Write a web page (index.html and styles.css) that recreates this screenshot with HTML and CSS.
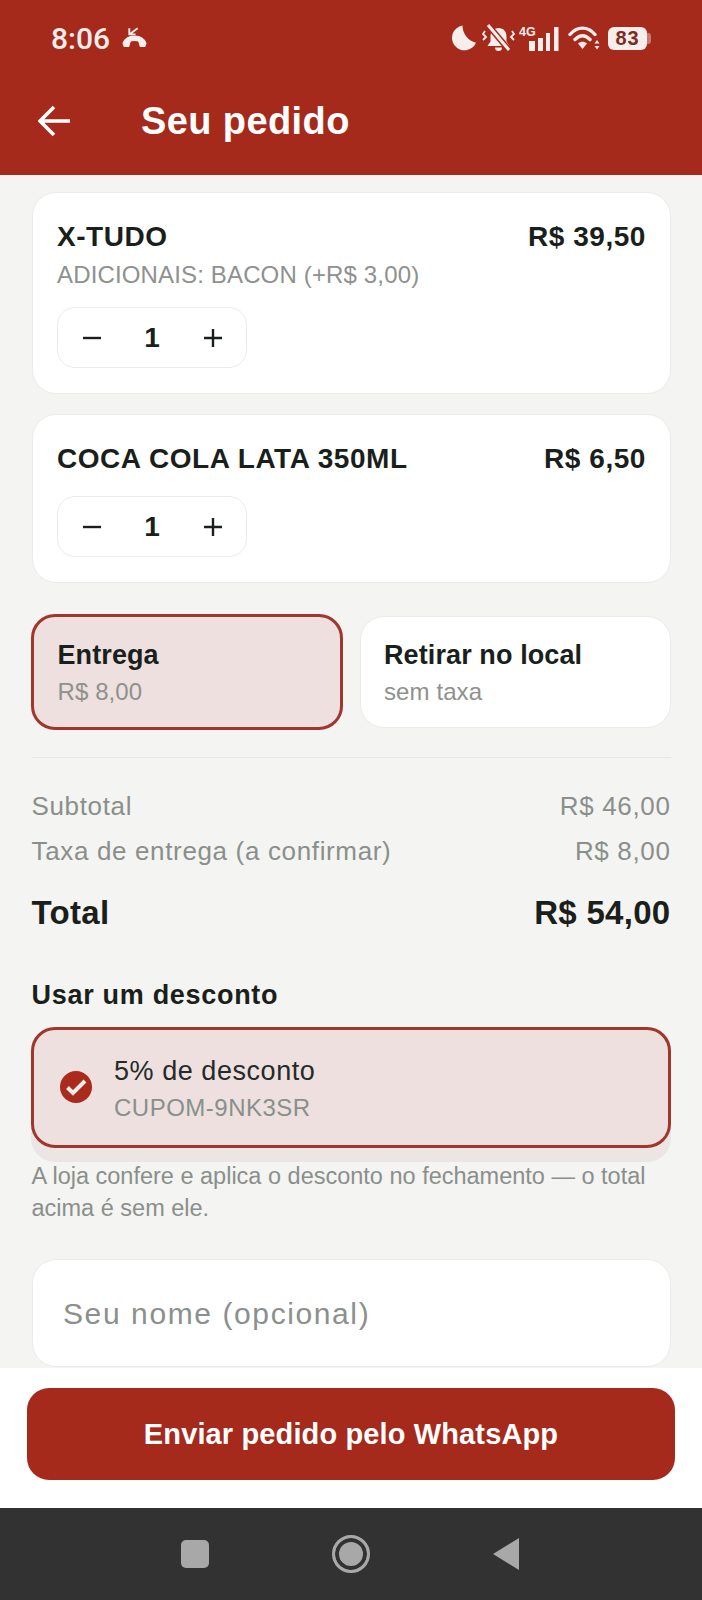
FILE: index.html
```html
<!DOCTYPE html>
<html lang="pt-BR">
<head>
    <meta charset="UTF-8">
    <meta name="viewport" content="width=device-width, initial-scale=1.0">
    <title>Seu pedido</title>
    <link rel="stylesheet" href="styles.css">
</head>
<body>
<div class="screen">
    <header class="top">
        <div class="status">
            <div class="status-left">
                <span class="clock">8:06</span>
                <svg class="ic-call" viewBox="0 0 24 20">
                    <path d="M1 15.500C3 10 7 8.500 12 8.500s9 1.500 11 7l-1 3h-4.500l-1.500-5c-2-1-6-1-8 0l-1.500 5H2z" fill="#f7eeec" stroke="#f7eeec" stroke-linejoin="round"/>
                    <path d="M7 1v6h6M7 7l8-6" stroke="#f7eeec" stroke-width="1.800" fill="none"/>
                </svg>
            </div>
            <div class="status-right">
                <svg class="ic-moon" viewBox="0 0 24 25">
                    <path d="M11 .5A12 12 0 1 0 24 17 A17 17 0 0 1 11 .5z" fill="#f7eeec"/>
                </svg>
                <svg class="ic-bell" viewBox="0 0 33 28">
                    <path d="M16.500 4c-5 0-8 3.500-8 8.500v5l-3 4.500h22l-3-4.500v-5c0-5-3-8.500-8-8.500z" fill="#f7eeec"/>
                    <path d="M13 23.500h7a3.500 3.500 0 0 1-7 0z" fill="#f7eeec"/>
                    <path d="M6 1l21 25" stroke="#a52a1c" stroke-width="6"/>
                    <path d="M6 1l21 25" stroke="#f7eeec" stroke-width="3"/>
                    <path d="M3 7l-2 3 3 3-3 3M30 7l2 3-3 3 3 3" stroke="#f7eeec" stroke-width="1.800" fill="none"/>
                </svg>
                <svg class="ic-signal" viewBox="0 0 40 25">
                    <text class="net" x="0" y="10">4G</text>
                    <rect x="10" y="15" width="6" height="10" fill="#f7eeec"/>
                    <rect x="19" y="12" width="5" height="13" fill="#f7eeec"/>
                    <rect x="27" y="7" width="4" height="18" fill="#f7eeec"/>
                    <rect x="35" y="1" width="4.500" height="24" fill="#f7eeec"/>
                </svg>
                <svg class="ic-wifi" viewBox="0 0 32 24">
                    <path d="M2 8.500C9 0 20 0 27 8.500M7 13.500c5-5 10-5 15 0" stroke="#f7eeec" stroke-width="3.400" stroke-linecap="round" fill="none"/>
                    <path d="M10 17.500c3-2.500 6-2.500 9 0l-4.500 5.500z" fill="#f7eeec"/>
                    <path d="M29 14l2.500 3.500h-5zM29 23.500l2.500-3.500h-5z" fill="#f7eeec"/>
                </svg>
                <div class="battery"><span>83</span></div>
            </div>
        </div>
        <div class="appbar">
            <svg class="ic-back" viewBox="0 0 34 32">
                <path d="M32 16H3M16 2L2 16l14 14" stroke="#fff" stroke-width="3.600" fill="none"/>
            </svg>
            <h1>Seu pedido</h1>
        </div>
    </header>

    <main class="content">
        <div class="card">
            <div class="item-head">
                <span>X-TUDO</span>
                <span>R$ 39,50</span>
            </div>
            <p class="item-sub">ADICIONAIS: BACON (+R$ 3,00)</p>
            <div class="qty">
                <svg viewBox="0 0 20 20"><path d="M1 10h18" /></svg>
                <span>1</span>
                <svg viewBox="0 0 20 20"><path d="M1 10h18M10 1v18" /></svg>
            </div>
        </div>
        <div class="card">
            <div class="item-head">
                <span>COCA COLA LATA 350ML</span>
                <span>R$ 6,50</span>
            </div>
            <div class="qty">
                <svg viewBox="0 0 20 20"><path d="M1 10h18" /></svg>
                <span>1</span>
                <svg viewBox="0 0 20 20"><path d="M1 10h18M10 1v18" /></svg>
            </div>
        </div>

        <div class="delivery">
            <div class="opt opt-on">
                <strong>Entrega</strong>
                <span>R$ 8,00</span>
            </div>
            <div class="opt">
                <strong>Retirar no local</strong>
                <span>sem taxa</span>
            </div>
        </div>

        <hr class="divider">

        <div class="line"><span>Subtotal</span><span>R$ 46,00</span></div>
        <div class="line"><span>Taxa de entrega (a confirmar)</span><span>R$ 8,00</span></div>
        <div class="total"><span>Total</span><span>R$ 54,00</span></div>

        <h2>Usar um desconto</h2>
        <div class="coupon-wrap">
            <div class="coupon">
                <svg class="ic-check" viewBox="0 0 32 32">
                    <circle cx="16" cy="16" r="16" fill="#ab2a1e"/>
                    <path d="M7.500 16.500l5.500 5.500L25 10" stroke="#f7eeec" stroke-width="4" fill="none"/>
                </svg>
                <div class="coupon-text">
                    <p class="coupon-title">5% de desconto</p>
                    <p class="coupon-code">CUPOM-9NK3SR</p>
                </div>
            </div>
        </div>
        <p class="note">A loja confere e aplica o desconto no fechamento — o total acima é sem ele.</p>

        <input class="name" type="text" placeholder="Seu nome (opcional)">
    </main>

    <footer class="bottom">
        <button type="button">Enviar pedido pelo WhatsApp</button>
    </footer>

    <nav class="navbar">
        <div class="nav-cell"><div class="nav-square"></div></div>
        <div class="nav-cell"><div class="nav-circle"></div></div>
        <div class="nav-cell">
            <svg class="ic-tri" viewBox="0 0 26 32"><path d="M26 0v32L0 16z" fill="#a8a8a8"/></svg>
        </div>
    </nav>
</div>
</body>
</html>
```

FILE: styles.css
```css
* {
    box-sizing: border-box;
}

body {
    margin: 0;
    font-family: "Liberation Sans", Arial, sans-serif;
    background-color: #f4f4f2;
    color: #1a1f1c;
}

p, h1, h2 {
    margin: 0;
}

.screen {
    display: flex;
    flex-direction: column;
    width: 702px;
    height: 1600px;
    overflow: hidden;
}

/* red top part */
.top {
    background-color: #a52a1c;
    height: 175px;
    flex-shrink: 0;
}

.status {
    display: flex;
    justify-content: space-between;
    align-items: center;
    height: 76px;
    padding: 0 55px 0 51px;
}

.status-left {
    display: flex;
    align-items: center;
    gap: 12px;
}

.clock {
    font-family: Roboto, sans-serif;
    font-weight: 500;
    font-size: 30px;
    color: #f7eeec;
}

.ic-call {
    width: 25px;
    height: 21px;
    margin-top: -2px;
}

.status-right {
    display: flex;
    align-items: center;
}

.ic-moon {
    width: 25px;
    height: 26px;
    margin-right: 6px;
}

.ic-bell {
    width: 33px;
    height: 28px;
    margin-right: 4px;
}

.ic-signal {
    width: 40px;
    height: 25px;
    margin-right: 9px;
}

.net {
    font-family: "Liberation Sans", sans-serif;
    font-weight: bold;
    font-size: 12.5px;
    fill: #f7eeec;
}

.ic-wifi {
    width: 32px;
    height: 24px;
    margin-right: 8px;
}

.battery {
    position: relative;
    width: 39px;
    height: 23px;
    border-radius: 6px;
    background-color: #f7eeec;
    color: #7d2a20;
    font-size: 20px;
    font-weight: bold;
    letter-spacing: 0.8px;
    line-height: 23px;
    text-align: center;
}

.battery::after {
    content: "";
    position: absolute;
    right: -4px;
    top: 6px;
    width: 4px;
    height: 11px;
    border-radius: 0 3px 3px 0;
    background-color: #c77a70;
}

.appbar {
    display: flex;
    align-items: center;
    height: 90px;
    padding-left: 38px;
}

.ic-back {
    width: 34px;
    height: 32px;
    margin-right: 69px;
}

h1 {
    font-size: 38px;
    font-weight: bold;
    letter-spacing: 0.4px;
    color: #fff;
}

/* scroll area */
.content {
    flex: 1;
    min-height: 0;
    overflow: hidden;
    padding: 17px 31.5px 0 31.5px;
}

.card {
    background-color: #fff;
    border: 1.5px solid #ecebe9;
    border-radius: 24px;
    padding: 25.5px 23.5px 25.5px 24.5px;
    margin-bottom: 20px;
}

.item-head {
    display: flex;
    justify-content: space-between;
    font-size: 28px;
    font-weight: bold;
    letter-spacing: 0.55px;
    line-height: 36px;
    padding-bottom: 3px;
}

.item-sub {
    font-size: 24px;
    line-height: 32px;
    color: #8e918e;
    letter-spacing: 0.15px;
    margin-top: 1px;
}

.qty {
    display: grid;
    grid-template-columns: 68px 52px 70px;
    align-items: center;
    justify-items: center;
    width: 190px;
    height: 61px;
    margin-top: 16px;
    padding-top: 1.5px;
    border: 1.5px solid #ecebe9;
    border-radius: 18px;
    font-size: 28px;
    font-weight: bold;
}

.qty svg {
    width: 20px;
    height: 20px;
    stroke: #1a1f1c;
    stroke-width: 2.400;
    fill: none;
}

.delivery {
    display: grid;
    grid-template-columns: 311px 1fr;
    gap: 17px;
    margin-top: 33px;
}

.opt {
    background-color: #fff;
    border: 1.500px solid #ecebe9;
    border-radius: 24px;
    padding: 20.5px 23.5px 18.5px;
}

.opt-on {
    background-color: #ede0df;
    border: 3px solid #a0362c;
    padding: 21.5px 24px 19px;
    margin: -2.5px 0 -2px -1px;
}

.opt strong {
    display: block;
    font-size: 27px;
    line-height: 34px;
    letter-spacing: 0.1px;
}

.opt span {
    display: block;
    font-size: 24px;
    line-height: 32px;
    margin-top: 4px;
    color: #8e918e;
    letter-spacing: 0.1px;
}

.divider {
    height: 0;
    margin: 29px 0 26px;
    border: 0;
    border-top: 1.5px solid #e8e8e6;
}

.line {
    display: flex;
    justify-content: space-between;
    font-size: 26px;
    line-height: 45px;
    letter-spacing: 0.65px;
    color: #8a8f8b;
}

.total {
    display: flex;
    justify-content: space-between;
    margin-top: 19px;
    font-size: 33px;
    font-weight: bold;
    line-height: 40px;
    letter-spacing: 0.3px;
}

h2 {
    margin-top: 45px;
    font-size: 27px;
    line-height: 34px;
    letter-spacing: 0.7px;
}

.coupon-wrap {
    margin: 15px -0.5px 0 -0.5px;
    padding-bottom: 14px;
    border-radius: 24px;
    background-color: #ebe5e3;
}

.coupon {
    display: flex;
    align-items: center;
    height: 121px;
    padding-left: 26px;
    background-color: #ede0df;
    border: 3px solid #a0362c;
    border-radius: 24px;
}

.ic-check {
    width: 32px;
    height: 32px;
    margin: -2px 22px 0 0;
}

.coupon-text {
    padding-top: 3px;
}

.coupon-title {
    font-size: 27px;
    line-height: 34px;
    letter-spacing: 0.55px;
    color: #262a28;
}

.coupon-code {
    font-size: 24px;
    line-height: 32px;
    margin-top: 4px;
    letter-spacing: 0.5px;
    color: #8a8f8b;
}

.note {
    margin-top: -1px;
    font-size: 23.5px;
    line-height: 31.5px;
    color: #8a8f8b;
}

.name {
    display: block;
    width: 100%;
    height: 108px;
    margin-top: 35px;
    padding: 2px 30.5px 0;
    background-color: #fff;
    border: 1.5px solid #ecebe9;
    border-radius: 24px;
    font-family: "Liberation Sans", Arial, sans-serif;
    font-size: 30px;
    letter-spacing: 1.6px;
}

.name::placeholder {
    color: #8a908c;
    opacity: 1;
}

/* send button */
.bottom {
    flex-shrink: 0;
    height: 140px;
    padding: 20px 27px;
    background-color: #fff;
}

.bottom button {
    display: block;
    width: 648px;
    height: 92px;
    padding-top: 2px;
    border: none;
    border-radius: 22px;
    background-color: #a52a1c;
    color: #fff;
    font-family: "Liberation Sans", Arial, sans-serif;
    font-size: 29px;
    font-weight: bold;
    letter-spacing: 0.13px;
}

/* android nav */
.navbar {
    flex-shrink: 0;
    display: flex;
    justify-content: center;
    align-items: center;
    height: 92px;
    background-color: #323232;
}

.nav-cell {
    display: flex;
    justify-content: center;
    align-items: center;
    width: 156px;
}

.nav-square {
    width: 28px;
    height: 28px;
    border-radius: 5px;
    background-color: #a8a8a8;
}

.nav-circle {
    width: 38px;
    height: 38px;
    border: 3px solid #a8a8a8;
    border-radius: 50%;
    background-color: #a8a8a8;
    box-shadow: inset 0 0 0 4px #323232;
}

.ic-tri {
    width: 26px;
    height: 32px;
    margin-left: -3px;
}
```
